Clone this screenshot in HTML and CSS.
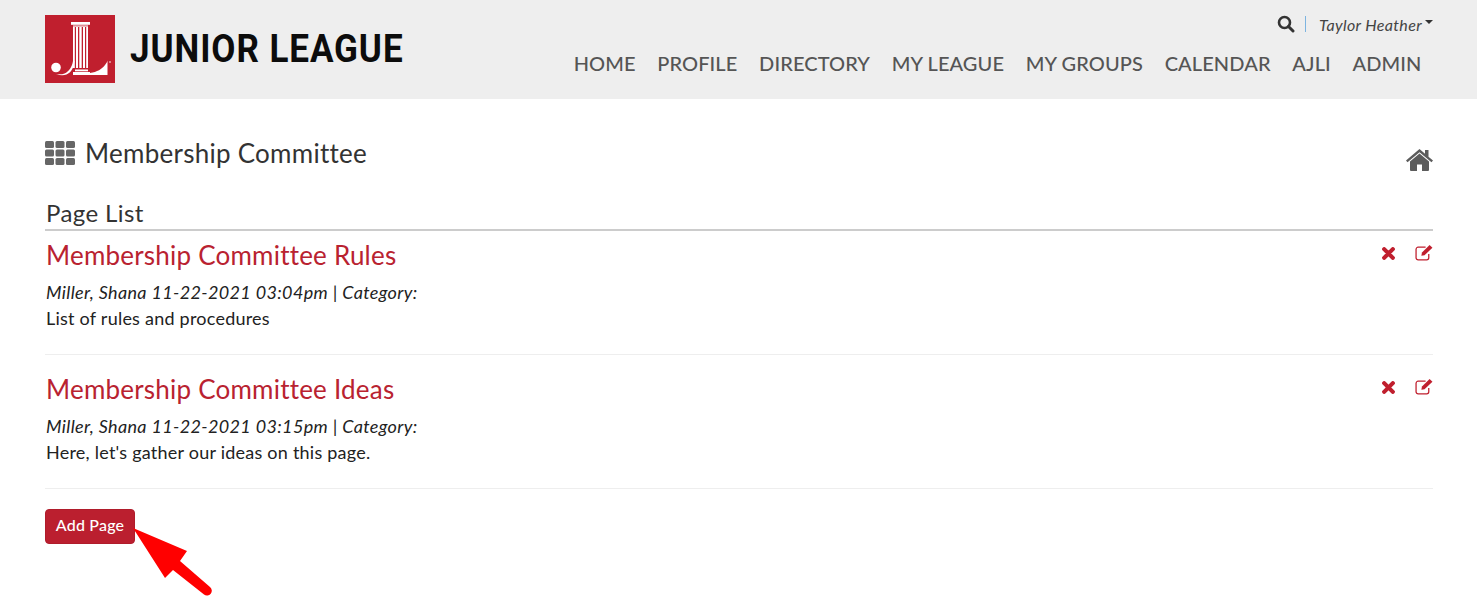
FILE: index.html
```html
<!DOCTYPE html>
<html lang="en">
<head>
<meta charset="utf-8">
<title>Membership Committee</title>
<link rel="stylesheet" href="styles.css">
</head>
<body>
<header class="site-header">
  <a class="brand" href="#">
    <svg class="brand-mark" viewBox="0 0 70 68" aria-hidden="true">
      <rect width="70" height="68" fill="#c01f2e"/>
      <g fill="#fff">
        <rect x="26" y="7" width="19" height="2.800"/>
        <rect x="28" y="10.500" width="15" height="1.200"/>
        <rect x="28" y="12" width="1.800" height="41"/>
        <rect x="31" y="12" width="2" height="41"/>
        <rect x="34.300" y="12" width="2.400" height="41"/>
        <rect x="38" y="12" width="2" height="41"/>
        <rect x="41.200" y="12" width="1.800" height="41"/>
        <rect x="30" y="54.500" width="13" height="1.800"/>
        <rect x="28" y="57" width="17" height="3"/>
        <path d="M28 46h1.500c-.5 6-3 11.500-8 13.500-3 1-6.500 1-10.500-.5 3 .5 6 .5 8.500-.5 4.500-2 7.500-6.500 8.500-12.500z"/>
        <circle cx="11" cy="52.500" r="4.800"/>
        <path d="M45 58c7-1 12-4 15-8 1-1.200 2-2.500 2.500-4.500V60H45z"/>
        <circle cx="65" cy="47" r=".8"/>
      </g>
    </svg>
    <span class="brand-name">JUNIOR LEAGUE</span>
  </a>
  <div class="header-right">
    <div class="utility">
      <svg class="search-icon" viewBox="0 0 18 18" aria-hidden="true">
        <circle cx="7.500" cy="7.500" r="5.500" fill="none" stroke="#333" stroke-width="2.600"/>
        <path d="M11.500 11.500L16 16" stroke="#333" stroke-width="3" stroke-linecap="round"/>
      </svg>
      <span class="utility-sep"></span>
      <span class="user-name">Taylor Heather</span>
      <span class="caret"></span>
    </div>
    <nav class="main-nav">
      <a href="#">HOME</a>
      <a href="#">PROFILE</a>
      <a href="#">DIRECTORY</a>
      <a href="#">MY LEAGUE</a>
      <a href="#">MY GROUPS</a>
      <a href="#">CALENDAR</a>
      <a href="#">AJLI</a>
      <a href="#">ADMIN</a>
    </nav>
  </div>
</header>
<main class="content">
  <div class="title-row">
    <div class="title-group">
      <svg class="grid-icon" viewBox="0 0 30 24" aria-hidden="true">
        <g fill="#666">
          <rect x="0" y="0" width="9" height="7" rx="1.500"/><rect x="10.500" y="0" width="9" height="7" rx="1.500"/><rect x="21" y="0" width="9" height="7" rx="1.500"/>
          <rect x="0" y="8.500" width="9" height="7" rx="1.500"/><rect x="10.500" y="8.500" width="9" height="7" rx="1.500"/><rect x="21" y="8.500" width="9" height="7" rx="1.500"/>
          <rect x="0" y="17" width="9" height="7" rx="1.500"/><rect x="10.500" y="17" width="9" height="7" rx="1.500"/><rect x="21" y="17" width="9" height="7" rx="1.500"/>
        </g>
      </svg>
      <h1>Membership Committee</h1>
    </div>
    <svg class="home-icon" viewBox="0 0 27 22" aria-hidden="true">
      <path fill="#5c5c5c" d="M13.500 4.500L4 12.500V21a1 1 0 0 0 1 1h6v-6.500h5V22h6a1 1 0 0 0 1-1v-8.500z"/>
      <path fill="#5c5c5c" d="M13.500 0L0 11.500l1.500 1.800L13.500 3.200l12 10.100 1.500-1.800-4.500-3.800V1h-3.500v3.700z"/>
    </svg>
  </div>
  <h2 class="list-heading">Page List</h2>
  <article class="page-item">
    <div class="item-head">
      <a class="item-title" href="#">Membership Committee Rules</a>
      <div class="item-actions">
        <svg class="x-icon" viewBox="0 0 12 12" aria-hidden="true"><path d="M2 2l8 8M10 2l-8 8" stroke="#c01f2e" stroke-width="3.800" stroke-linecap="round"/></svg>
        <svg class="edit-icon" viewBox="0 0 17 16" aria-hidden="true"><path d="M13 9.500V13a2 2 0 0 1-2 2H3a2 2 0 0 1-2-2V5a2 2 0 0 1 2-2h7" fill="none" stroke="#c01f2e" stroke-width="1.200"/><path d="M6 11l.6-3L13.800.8l2.700 2.700L9 10.500z" fill="#c01f2e"/></svg>
      </div>
    </div>
    <p class="item-meta">Miller, Shana 11-22-2021 03:04pm | Category:</p>
    <p class="item-desc">List of rules and procedures</p>
  </article>
  <article class="page-item">
    <div class="item-head">
      <a class="item-title" href="#">Membership Committee Ideas</a>
      <div class="item-actions">
        <svg class="x-icon" viewBox="0 0 12 12" aria-hidden="true"><path d="M2 2l8 8M10 2l-8 8" stroke="#c01f2e" stroke-width="3.800" stroke-linecap="round"/></svg>
        <svg class="edit-icon" viewBox="0 0 17 16" aria-hidden="true"><path d="M13 9.500V13a2 2 0 0 1-2 2H3a2 2 0 0 1-2-2V5a2 2 0 0 1 2-2h7" fill="none" stroke="#c01f2e" stroke-width="1.200"/><path d="M6 11l.6-3L13.800.8l2.700 2.700L9 10.500z" fill="#c01f2e"/></svg>
      </div>
    </div>
    <p class="item-meta">Miller, Shana 11-22-2021 03:15pm | Category:</p>
    <p class="item-desc">Here, let's gather our ideas on this page.</p>
  </article>
  <button class="add-btn" type="button">Add Page</button>
</main>
<svg class="annotation-arrow" viewBox="0 0 80 72" aria-hidden="true">
  <path fill="#f00" d="M0 0L54 23 47 33 77 59a4.800 4.800 0 0 1-6 7.500L40 42 32 50z"/>
</svg>
</body>
</html>
```

FILE: styles.css
```css
* { box-sizing: border-box; }
html, body { margin: 0; padding: 0; }
body {
  position: relative;
  height: 606px;
  overflow: hidden;
  background: #fff;
  color: #222;
  font-family: Lato, "Open Sans", sans-serif;
}
a { text-decoration: none; color: inherit; }

.site-header {
  height: 99px;
  background: #eee;
  padding: 14px 44px 0 45px;
  display: flex;
  justify-content: space-between;
  align-items: flex-start;
}
.brand { display: flex; align-items: center; gap: 15px; height: 68px; margin-top: 1px; }
.brand-mark { width: 70px; height: 68px; display: block; }
.brand-name {
  font-family: Roboto, sans-serif;
  font-weight: 700;
  font-size: 38px;
  line-height: 68px;
  letter-spacing: 1px;
  color: #0c0c0c;
  white-space: nowrap;
  transform: scaleX(.922);
  transform-origin: left center;
}

.header-right { display: flex; flex-direction: column; align-items: flex-end; }
.utility { display: flex; align-items: center; height: 20px; }
.search-icon { width: 18px; height: 18px; display: block; }
.utility-sep { width: 1px; height: 16px; background: #7db4e0; margin: 0 13px 0 10px; }
.user-name { font-size: 16px; font-style: italic; color: #444; letter-spacing: .36px; }
.caret {
  width: 0; height: 0; margin: 0 0 4px 3px;
  border-left: 4.500px solid transparent;
  border-right: 4.500px solid transparent;
  border-top: 4.500px solid #333;
}
.main-nav {
  display: flex;
  gap: 21.700px;
  margin-top: 17px;
  padding-right: 11.500px;
  font-size: 20px;
  line-height: 24px;
  font-weight: 500;
  letter-spacing: .1px;
  color: #555;
  white-space: nowrap;
}

.content { padding: 0 44px 0 45px; }
.title-row { display: flex; justify-content: space-between; align-items: flex-start; padding-top: 40px; height: 99px; }
.title-group { display: flex; align-items: center; gap: 10px; height: 28px; }
.grid-icon { width: 30px; height: 24px; display: block; }
h1 { margin: 0; font-size: 26px; line-height: 28px; font-weight: 400; letter-spacing: .27px; color: #333; }
.home-icon { width: 27px; height: 22px; display: block; margin-top: 10px; }

.list-heading {
  margin: 0;
  font-size: 24px;
  line-height: 30px;
  height: 33px;
  font-weight: 400;
  letter-spacing: .4px;
  color: #333;
  border-bottom: 2px solid #ccc;
  padding-left: 1px;
}
.page-item { height: 124px; border-bottom: 1px solid #eee; padding-top: 8px; margin-bottom: 10px; }
.page-item:last-of-type { margin-bottom: 20px; }
.item-head { display: flex; justify-content: space-between; align-items: flex-start; padding-left: 1px; }
.item-title { font-size: 26px; line-height: 32px; letter-spacing: .22px; color: #b92230; }
.item-actions { display: flex; align-items: center; gap: 20px; padding-top: 5px; }
.x-icon { width: 13px; height: 13px; display: block; margin-top: 2px; }
.edit-icon { width: 18px; height: 17px; display: block; }
.item-meta { margin: 9px 0 0 1px; font-size: 18px; line-height: 24px; font-style: italic; letter-spacing: .35px; color: #222; }
.item-desc { margin: 2px 0 0 1px; font-size: 18px; line-height: 24px; letter-spacing: .23px; color: #222; }

.add-btn {
  display: block;
  width: 90px;
  height: 35px;
  padding: 0 0 5px;
  background: #bb1f2f;
  border: 1px solid #b01c2b;
  border-radius: 4px;
  color: #fff;
  font-family: inherit;
  font-size: 16px;
  font-weight: 500;
  letter-spacing: .2px;
}

.annotation-arrow { position: absolute; left: 133px; top: 528px; width: 80px; height: 72px; }
```
